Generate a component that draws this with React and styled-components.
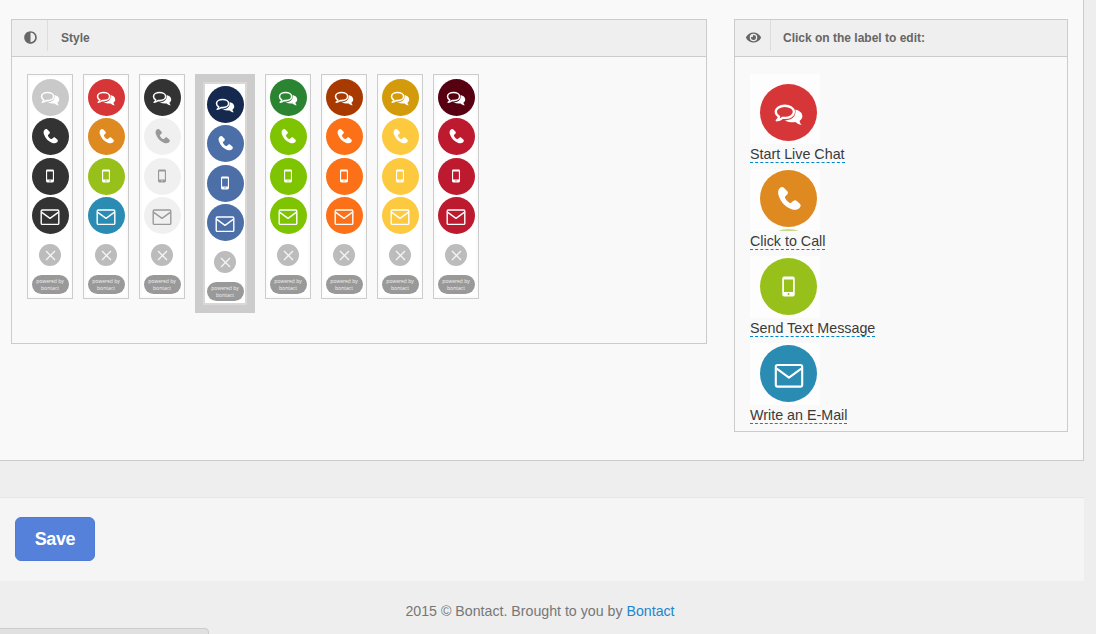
import React from "react";
import styled, { createGlobalStyle } from "styled-components";
import { FaAdjust, FaEye } from "react-icons/fa";

const GlobalStyle = createGlobalStyle`
  * {
    box-sizing: border-box;
  }
  html, body {
    margin: 0;
    padding: 0;
    height: 100%;
    overflow: hidden;
    background: #eeeeee;
    font-family: "Liberation Sans", Arial, sans-serif;
  }
`;

const Page = styled.div`
  position: relative;
  width: 1096px;
  height: 634px;
  overflow: hidden;
`;

const Panel = styled.section`
  display: flex;
  align-items: flex-start;
  gap: 27px;
  width: 1084px;
  padding: 19px 15px 28px 11px;
  background: #f9f9f9;
  border-right: 1px solid #cccccc;
  border-bottom: 1px solid #cccccc;
`;

const Widget = styled.div`
  width: ${(p) => p.$width}px;
  border: 1px solid #cccccc;
`;

const WidgetHeader = styled.div`
  display: flex;
  align-items: flex-start;
  height: 37px;
  background: #efefef;
  border-bottom: 1px solid #cccccc;
`;

const HeaderIcon = styled.div`
  display: flex;
  align-items: center;
  justify-content: center;
  width: 36px;
  height: 31px;
  padding: 3px 0 0 1px;
  border-right: 1px solid #dddddd;
  color: #666666;
  font-size: ${(p) => p.$size}px;
`;

const HeaderTitle = styled.h5`
  margin: 0;
  padding-left: ${(p) => p.$inset}px;
  font-size: 12px;
  line-height: 36px;
  font-weight: bold;
  color: #666666;
`;

const StyleRow = styled.div`
  display: flex;
  align-items: flex-start;
  gap: 10px;
  padding: 17px 15px 30px;
`;

const Thumb = styled.div`
  padding: 2px;
  border: ${(p) => (p.$selected ? "8px solid #cccccc" : "1px solid #cccccc")};
  background: ${(p) => (p.$selected ? "#dbd7d7" : "#fbfbfb")};
`;

const ThumbInner = styled.div`
  display: flex;
  flex-direction: column;
  align-items: center;
  width: 40px;
  height: 219px;
  padding-top: 1.5px;
  background: #ffffff;
`;

const Circle = styled.div`
  position: relative;
  display: flex;
  align-items: center;
  justify-content: center;
  flex: none;
  width: ${(p) => p.$size}px;
  height: ${(p) => p.$size}px;
  margin-bottom: ${(p) => p.$gap || 0}px;
  border-radius: 50%;
  background: ${(p) => p.$bg};
  color: ${(p) => p.$fg};
`;

const CloseDot = styled.div`
  display: flex;
  align-items: center;
  justify-content: center;
  flex: none;
  width: 22px;
  height: 22px;
  margin-top: 10px;
  border-radius: 50%;
  background: #bcbcbc;
`;

const Powered = styled.div`
  flex: none;
  width: 37px;
  height: 19px;
  margin-top: 9px;
  padding-top: 3px;
  border-radius: 10px;
  background: #999999;
  color: #f2f2f2;
  font-family: "Open Sans", sans-serif;
  font-size: 5px;
  line-height: 7px;
  text-align: center;
`;

const LabelList = styled.div`
  display: flex;
  flex-direction: column;
  gap: 6px;
  padding: 17px 15px 7px;
`;

const LabelItem = styled.div`
  display: flex;
  flex-direction: column;
  align-items: flex-start;
`;

const Preview = styled.div`
  position: relative;
  width: 70px;
  height: ${(p) => p.$height}px;
  padding: ${(p) => p.$top}px 0 0 10px;
  overflow: hidden;
  background: #fdfdfd;
`;

// the top of the next sprite frame shows under the orange button
const NextPeek = styled.div`
  position: absolute;
  left: 10px;
  top: 60px;
  width: 57px;
  height: 57px;
  border-radius: 50%;
  background: #c6dc8a;
`;

const EditLabel = styled.a`
  display: block;
  height: 19px;
  font-size: 14.3px;
  line-height: 21px;
  color: #3a3a3a;
  border-bottom: 1px dashed #0088cc;
`;

const SaveBar = styled.div`
  width: 1084px;
  height: 84px;
  margin-top: 36px;
  padding: 19px 15px;
  background: #f5f5f5;
  border-top: 1px solid #e5e5e5;
`;

const SaveButton = styled.button`
  display: block;
  width: 80px;
  height: 44px;
  padding: 0;
  border: 1px solid #4f7bd6;
  border-radius: 6px;
  background: #5681db;
  color: #ffffff;
  font-family: "Liberation Sans", Arial, sans-serif;
  font-size: 18px;
  font-weight: bold;
  letter-spacing: -0.4px;
`;

const Footer = styled.footer`
  width: 1084px;
  padding-top: 22px;
  padding-right: 4px;
  font-size: 14.2px;
  line-height: 16px;
  color: #777777;
  text-align: center;
`;

const FooterLink = styled.a`
  color: #1b87d0;
  text-decoration: none;
`;

const DockedTab = styled.div`
  position: absolute;
  left: -1px;
  bottom: -6px;
  width: 210px;
  height: 12px;
  background: #e0e0e0;
  border: 1px solid #cccccc;
  border-radius: 0 4px 0 0;
`;

const ChatIcon = ({ size }) => (
  <svg width={size} height={size} viewBox="0 0 100 100" fill="none">
    <path
      d="M39 29.500c-15 0-27.500 8-27.500 18.500 0 6 4 11 10 15-1 4-3 8-7 11 7-1 13-3 18-8 2 .3 4 .5 6.500 .5 15 0 27.500-8 27.500-18.500S54 29.500 39 29.500z"
      stroke="currentColor"
      strokeWidth="7"
      strokeLinejoin="round"
    />
    <path
      d="M71 41c12 3 21 10 21 20 0 6-3 10-8 14 0 5 2 9 6 13-8-1-14-4-19-9-10 1.500-22 0-33-5 18 0 36-8 33-33z"
      fill="currentColor"
    />
  </svg>
);

const PhoneIcon = ({ size }) => (
  <svg width={size} height={size} viewBox="0 0 100 100" fill="currentColor">
    <path d="M32 12c-4-3-9-2-13 2-6 6-7 15-3 26 7 21 23 37 43 44 11 4 20 2 26-4 4-4 5-9 2-13L75 56c-3-3-7-3-10 0l-7 6c-2 2-4 2-6 1-7-4-11-9-15-16-1-2-1-4 1-6l6-6c3-3 3-7 1-10z" />
  </svg>
);

const MobileIcon = ({ size }) => (
  <svg width={size} height={size} viewBox="0 0 100 100" fill="currentColor">
    <path
      fillRule="evenodd"
      d="M33 10h34a8 8 0 0 1 8 8v64a8 8 0 0 1-8 8H33a8 8 0 0 1-8-8V18a8 8 0 0 1 8-8zM32 22v50h36V22zM50 76a4 4 0 1 0 0 8 4 4 0 0 0 0-8z"
    />
  </svg>
);

const MailIcon = ({ size }) => (
  <svg width={size} height={size} viewBox="0 0 100 100" fill="none">
    <rect x="6" y="20" width="88" height="72" rx="6" stroke="currentColor" strokeWidth="7" />
    <path d="M9 32 50 62 91 32" stroke="currentColor" strokeWidth="7" strokeLinejoin="round" />
  </svg>
);

const CloseIcon = () => (
  <svg width="11" height="11" viewBox="0 0 11 11">
    <path d="M1 1 10 10M10 1 1 10" stroke="#f6f6f6" strokeWidth="1.3" />
  </svg>
);

const themes = [
  { colors: ["#c9c9c9", "#333333", "#333333", "#333333"] },
  { colors: ["#d63638", "#df8a20", "#97c11a", "#2a8cb3"] },
  { colors: ["#333333", "#f0f0f0", "#f0f0f0", "#f0f0f0"], fg: [null, "#999999", "#999999", "#999999"] },
  { colors: ["#15294f", "#4d6fa8", "#4d6fa8", "#4d6fa8"], selected: true },
  { colors: ["#2a8431", "#7ec400", "#7ec400", "#7ec400"] },
  { colors: ["#a83a00", "#fc7018", "#fc7018", "#fc7018"] },
  { colors: ["#d39a0b", "#fdc93f", "#fdc93f", "#fdc93f"] },
  { colors: ["#560011", "#bd1a30", "#bd1a30", "#bd1a30"] },
];

const ICONS = [
  [ChatIcon, 22],
  [PhoneIcon, 19],
  [MobileIcon, 16],
  [MailIcon, 20],
];

const labels = [
  { text: "Start Live Chat", color: "#d63638", Icon: ChatIcon, size: 33, height: 70, top: 10 },
  { text: "Click to Call", color: "#df8a20", Icon: PhoneIcon, size: 30, height: 62, top: 1, peek: true },
  { text: "Send Text Message", color: "#97c11a", Icon: MobileIcon, size: 25, height: 62, top: 2 },
  { text: "Write an E-Mail", color: "#2a8cb3", Icon: MailIcon, size: 30, height: 62, top: 2 },
];

const StyleThumb = ({ theme }) => (
  <Thumb $selected={theme.selected}>
    <ThumbInner>
      {ICONS.map(([Icon, size], i) => (
        <Circle
          key={i}
          $size={37}
          $gap={i < 3 ? 2.5 : 0}
          $bg={theme.colors[i]}
          $fg={(theme.fg && theme.fg[i]) || "#ffffff"}
        >
          <Icon size={size} />
        </Circle>
      ))}
      <CloseDot>
        <CloseIcon />
      </CloseDot>
      <Powered>
        powered by
        <br />
        bontact
      </Powered>
    </ThumbInner>
  </Thumb>
);

export default function App() {
  return (
    <Page>
      <GlobalStyle />
      <Panel>
        <Widget $width={696}>
          <WidgetHeader>
            <HeaderIcon $size={13}>
              <FaAdjust />
            </HeaderIcon>
            <HeaderTitle $inset={13}>Style</HeaderTitle>
          </WidgetHeader>
          <StyleRow>
            {themes.map((theme, i) => (
              <StyleThumb key={i} theme={theme} />
            ))}
          </StyleRow>
        </Widget>
        <Widget $width={334}>
          <WidgetHeader>
            <HeaderIcon $size={15}>
              <FaEye />
            </HeaderIcon>
            <HeaderTitle $inset={12}>Click on the label to edit:</HeaderTitle>
          </WidgetHeader>
          <LabelList>
            {labels.map(({ text, color, Icon, size, height, top, peek }) => (
              <LabelItem key={text}>
                <Preview $height={height} $top={top}>
                  {peek && <NextPeek />}
                  <Circle $size={57} $bg={color} $fg="#ffffff">
                    <Icon size={size} />
                  </Circle>
                </Preview>
                <EditLabel>{text}</EditLabel>
              </LabelItem>
            ))}
          </LabelList>
        </Widget>
      </Panel>
      <SaveBar>
        <SaveButton>Save</SaveButton>
      </SaveBar>
      <Footer>
        2015 © Bontact. Brought to you by <FooterLink href="#">Bontact</FooterLink>
      </Footer>
      <DockedTab />
    </Page>
  );
}
